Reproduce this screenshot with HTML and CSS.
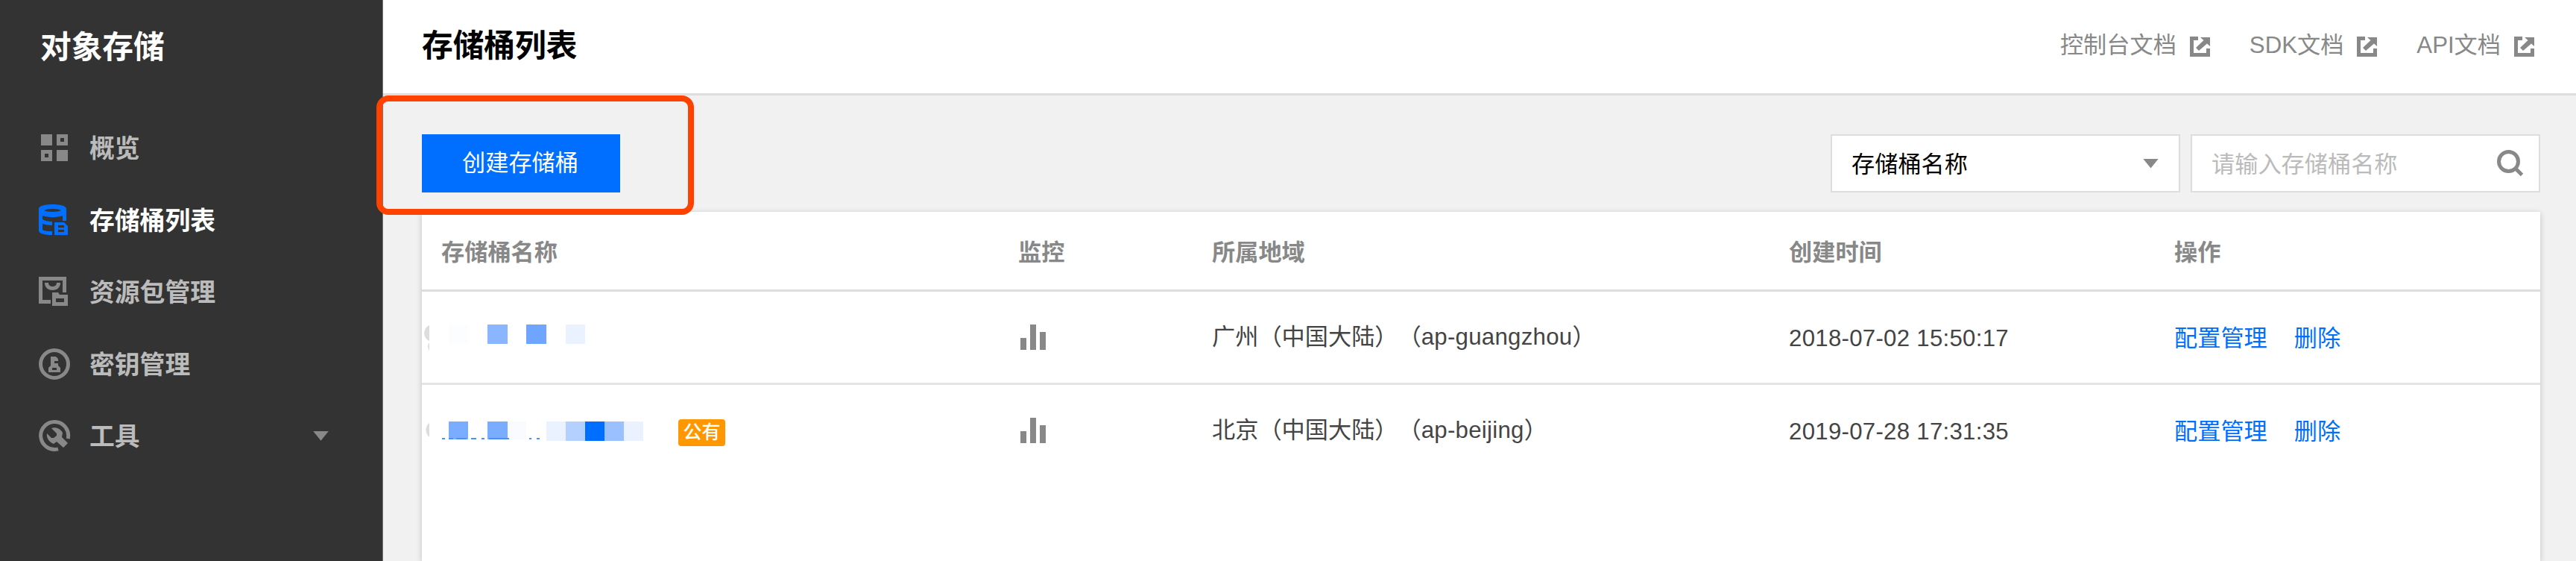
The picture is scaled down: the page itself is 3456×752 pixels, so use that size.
FILE: index.html
```html
<!DOCTYPE html>
<html lang="zh-CN">
<head>
<meta charset="utf-8">
<title>存储桶列表</title>
<link rel="stylesheet" href="styles.css">
</head>
<body>
<div class="app">
  <aside class="sidebar">
    <h1 class="brand">对象存储</h1>
    <nav class="nav">
      <a class="nav-item">
        <svg class="nav-icon" viewBox="0 0 44 44"><path fill-rule="evenodd" d="M4 4h15v15H4zM25 4h15v15H25zM30 9v5h5V9zM4 25h15v15H4zM9 30v5h5v-5zM25 25h15v15H25z"/></svg>
        <span>概览</span>
      </a>
      <a class="nav-item active">
        <svg class="nav-icon" viewBox="0 0 44 44"><path fill-rule="evenodd" d="M1 7C1 3 9 1 19.500 1S38 3 38 7v16h-5v-7c-4 1.400-8 2-13.500 2S10 17.400 6 16v5c3 2 7 3 13 3v5c-5 0-9-.8-13-2v8c2 1.500 6 2 13 2v5C9 42 1 40 1 36zM8 9c2 1.300 6 2 11.500 2S29 10.300 31 9c-2-1.300-6-2-11.500-2S10 7.700 8 9z"/><path fill-rule="evenodd" d="M22 25h13l5 5v12H22zM27 29v3h8v-3zM27 35v3h8v-3z"/></svg>
        <span>存储桶列表</span>
      </a>
      <a class="nav-item">
        <svg class="nav-icon" viewBox="0 0 44 44"><path d="M1 2h37v21h-5V7H6v26h11v5H1z"/><path d="M9 10h5c0 4 3 5 5.500 5S25 14 25 10h5c0 6-4 10-10.500 10S9 16 9 10z"/><path fill-rule="evenodd" d="M19 23h8l2 3h11v15H19zM24 31v5h11v-5z"/></svg>
        <span>资源包管理</span>
      </a>
      <a class="nav-item">
        <svg class="nav-icon" viewBox="0 0 44 44"><circle class="ring" cx="22" cy="22" r="18.500"/><path fill-rule="evenodd" d="M17 12h7l3 3v3h-5v3h5v3l3 3v6H14v-6l3-3zM19 27v3h6v-3z"/></svg>
        <span>密钥管理</span>
      </a>
      <a class="nav-item">
        <svg class="nav-icon" viewBox="0 0 44 44"><path class="ring" d="M40.200 26A18.500 18.500 0 1 0 27 39.800"/><path d="M18 12c6-2 12 1 15 6l-1 6 8 8-6 6-9-8-4 3c-6-2-10-8-9-14l6 6h3l4-3v-3z"/></svg>
        <span>工具</span>
        <i class="caret nav-caret"></i>
      </a>
    </nav>
  </aside>
  <main class="main">
    <header class="header">
      <h2 class="title">存储桶列表</h2>
      <div class="doc-links">
        <a class="doc-link"><span>控制台文档</span><svg class="ext-icon" viewBox="0 0 27 27"><path d="M0 0h11v5H5v17h17v-6h5v11H0z"/><path d="M14 1h13v12l-4-3.500L12 19l-4-4L18.500 5z"/></svg></a>
        <a class="doc-link"><span>SDK文档</span><svg class="ext-icon" viewBox="0 0 27 27"><path d="M0 0h11v5H5v17h17v-6h5v11H0z"/><path d="M14 1h13v12l-4-3.500L12 19l-4-4L18.500 5z"/></svg></a>
        <a class="doc-link"><span>API文档</span><svg class="ext-icon" viewBox="0 0 27 27"><path d="M0 0h11v5H5v17h17v-6h5v11H0z"/><path d="M14 1h13v12l-4-3.500L12 19l-4-4L18.500 5z"/></svg></a>
      </div>
    </header>
    <section class="content">
      <div class="toolbar">
        <button class="create">创建存储桶</button>
        <div class="filters">
          <div class="field select"><span>存储桶名称</span><i class="caret"></i></div>
          <div class="field search"><span>请输入存储桶名称</span><svg class="search-icon" viewBox="0 0 38 38"><circle cx="16.500" cy="16.500" r="13"/><path d="M25.500 25.500l9 9"/></svg></div>
        </div>
        <div class="highlight"></div>
      </div>
      <div class="table">
        <div class="row head">
          <div>存储桶名称</div><div>监控</div><div>所属地域</div><div>创建时间</div><div>操作</div>
        </div>
        <div class="row">
          <div class="name"><svg class="mosaic" viewBox="0 0 310 40"><path fill="#ddd" d="M10 5C1 9 1 22 10 26zM10 28q-4 5 0 11z"/><path fill="#fcfdff" d="M36 4h26v26H36z"/><path fill="#8ab6ff" d="M88 4h27v26H88z"/><path fill="#6ea5ff" d="M140 4h27v26h-27z"/><path fill="#ebf2ff" d="M193 4h26v26h-26z"/></svg></div>
          <div><svg class="bars" viewBox="0 0 34 34"><path d="M0 18h8v16H0zM13 0h8v34h-8zM26 10h8v24h-8z"/></svg></div>
          <div class="region">广州（中国大陆）（<span class="latin">ap-guangzhou</span>）</div>
          <div class="time latin">2018-07-02 15:50:17</div>
          <div class="ops"><a>配置管理</a><a>删除</a></div>
        </div>
        <div class="row">
          <div class="name"><svg class="mosaic" viewBox="0 0 310 40"><path fill="#ddd" d="M10 11C4 15 4 25 10 30z"/><path fill="#7aadff" d="M36 9h26v24H36zM88 9h27v24H88z"/><path fill="#f9fbff" d="M115 9h25v24h-25z"/><path fill="#ebf2ff" d="M167 9h26v26h-26zM271 9h26v26h-26z"/><path fill="#b4d0ff" d="M193 9h26v26h-26z"/><path fill="#006eff" d="M219 9h26v26h-26z"/><path fill="#9bc0ff" d="M245 9h26v26h-26z"/><path fill="#4a90ff" d="M27 31h4v2h-4zM36 31h6v2h-6zM46 31h14v2H46zM66 31h7v2h-7zM80 31h4v2h-4zM90 31h27v2H90zM144 31h3v2h-3zM154 31h4v2h-4z"/></svg><span class="tag">公有</span></div>
          <div><svg class="bars" viewBox="0 0 34 34"><path d="M0 18h8v16H0zM13 0h8v34h-8zM26 10h8v24h-8z"/></svg></div>
          <div class="region">北京（中国大陆）（<span class="latin">ap-beijing</span>）</div>
          <div class="time latin">2019-07-28 17:31:35</div>
          <div class="ops"><a>配置管理</a><a>删除</a></div>
        </div>
      </div>
    </section>
  </main>
</div>
</body>
</html>
```
FILE: styles.css
```css
* { box-sizing: border-box; }
body {
  margin: 0;
  background: #f1f1f1;
  font-family: "Liberation Sans", "Noto Sans CJK SC", sans-serif;
  font-size: 31.200px;
  color: #444;
  text-spacing-trim: space-all;
}
h1, h2 { margin: 0; font-weight: 700; }
.app { display: flex; height: 752px; overflow: hidden; }

.sidebar { width: 514px; flex: none; background: #333; border-right: 1px solid #777; }
.brand { height: 126px; padding-left: 54px; font-size: 41.700px; line-height: 128px; color: #fff; }
.nav { padding-top: 24px; }
.nav-item {
  display: flex;
  align-items: center;
  height: 96.500px;
  padding: 0 72px 0 51px;
  font-size: 33.800px;
  font-weight: 700;
  color: #bbb;
}
.nav-item span { padding-bottom: 3px; }
.nav-icon { width: 44px; height: 44px; margin-right: 25px; fill: #888; }
.nav-icon .ring { fill: none; stroke: #888; stroke-width: 5; }
.nav-item.active { color: #fff; }
.nav-item.active .nav-icon { fill: #006eff; }
.caret {
  width: 21px;
  height: 13px;
  background: #888;
  clip-path: polygon(0 0, 100% 0, 50% 100%);
}
.nav-caret { margin-left: auto; }

.main { flex: 1; display: flex; flex-direction: column; }
.header {
  display: flex;
  justify-content: space-between;
  height: 128px;
  padding: 0 56px 0 52px;
  background: #fff;
  border-bottom: 3px solid #ddd;
}
.title { font-size: 41.700px; line-height: 124px; color: #000; }
.doc-links { display: flex; gap: 53px; height: 120px; }
.doc-link { display: flex; align-items: center; gap: 18px; color: #888; }
.doc-link span { padding-bottom: 5px; }
.ext-icon { width: 27px; height: 27px; fill: #888; margin-top: 4px; }

.content { flex: 1; display: flex; flex-direction: column; padding: 52px 48px 0 52px; }
.toolbar { position: relative; display: flex; justify-content: space-between; height: 104px; }
.create {
  width: 266px;
  height: 78px;
  padding: 0 2px 0 0;
  border: 0;
  background: #006eff;
  font: inherit;
  line-height: 76px;
  color: #fff;
}
.highlight {
  position: absolute;
  left: -61px;
  top: -52px;
  width: 426px;
  height: 160px;
  border: 8px solid #ff4200;
  border-radius: 16px;
}
.filters { display: flex; gap: 14px; }
.field {
  display: flex;
  align-items: center;
  justify-content: space-between;
  width: 469px;
  height: 78px;
  border: 2px solid #ddd;
  background: #fff;
}
.field span { padding-bottom: 3px; }
.select { padding: 0 27px 0 26px; color: #000; }
.search { padding: 0 19px 0 26px; color: #bbb; }
.search-icon { width: 38px; height: 38px; fill: none; stroke: #888; stroke-width: 5; }

.table { flex: 1; background: #fff; box-shadow: 0 2px 8px rgba(0, 0, 0, 0.2); }
.row {
  display: grid;
  grid-template-columns: 774px 260px 774px 517px 1fr;
  align-items: center;
  height: 125px;
  padding-left: 26px;
  border-bottom: 3px solid #e5e5e5;
}
.row:last-child { border-color: transparent; }
.row.head { height: 107px; padding-bottom: 2px; border-color: #ddd; font-weight: 700; color: #888; }
.name { display: flex; align-items: center; margin-left: -26px; }
.mosaic { width: 310px; height: 40px; margin-bottom: 3px; }
.tag {
  width: 63px;
  height: 36px;
  margin: 5px 0 0 34px;
  border-radius: 4px;
  background: #ff9700;
  font-size: 25px;
  font-weight: 500;
  line-height: 34px;
  text-align: center;
  color: #fff;
}
.bars { display: block; width: 34px; height: 34px; margin-left: 3px; fill: #888; }
.latin { letter-spacing: 0.28px; }
.region { padding-bottom: 8px; }
.time { padding-top: 3px; }
.ops { display: flex; gap: 36px; padding-bottom: 3px; color: #006eff; }
```
